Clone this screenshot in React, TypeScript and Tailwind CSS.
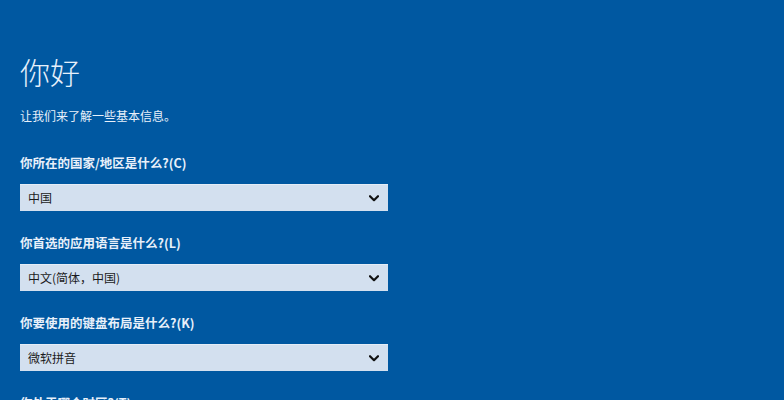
import React from "react";

const font = { fontFamily: '"Noto Sans CJK SC", "Noto Sans", sans-serif' };

function Chevron() {
  return (
    <svg width="10" height="7" viewBox="0 0 10 7" className="shrink-0">
      <polyline points="1,1.2 5,5.2 9,1.2" fill="none" stroke="#111" strokeWidth="2.2" strokeLinecap="round" strokeLinejoin="round" />
    </svg>
  );
}

function Field({ label, value, first }: { label: string; value: string; first?: boolean }) {
  return (
    <div className={first ? "mt-[33px]" : "mt-[24px]"}>
      <div className="text-[12.5px] leading-[16px] font-bold text-[#e8f0fa]">{label}</div>
      <div className="mt-[13px] w-[368px] h-[27px] bg-[#d3e0ef] border-t border-[#e4edf7] flex items-center justify-between pl-[8px] pr-[9px]">
        <span className="text-[12px] text-[#1b1b1b]">{value}</span>
        <Chevron />
      </div>
    </div>
  );
}

export default function App() {
  return (
    <div className="w-[784px] h-[400px] overflow-hidden bg-[#0058a1] pl-[20px] pt-[56px]" style={font}>
      <div className="text-[30px] leading-[30px] font-light text-[#e6f0fb]">你好</div>
      <div className="mt-[24px] text-[12px] leading-[12px] text-[#e8f0fa]">让我们来了解一些基本信息。</div>
      <Field first label="你所在的国家/地区是什么?(C)" value="中国" />
      <Field label="你首选的应用语言是什么?(L)" value="中文(简体，中国)" />
      <Field label="你要使用的键盘布局是什么?(K)" value="微软拼音" />
      <div className="mt-[24px] text-[12.5px] leading-[16px] font-bold text-[#e8f0fa]">你处于哪个时区?(T)</div>
    </div>
  );
}
